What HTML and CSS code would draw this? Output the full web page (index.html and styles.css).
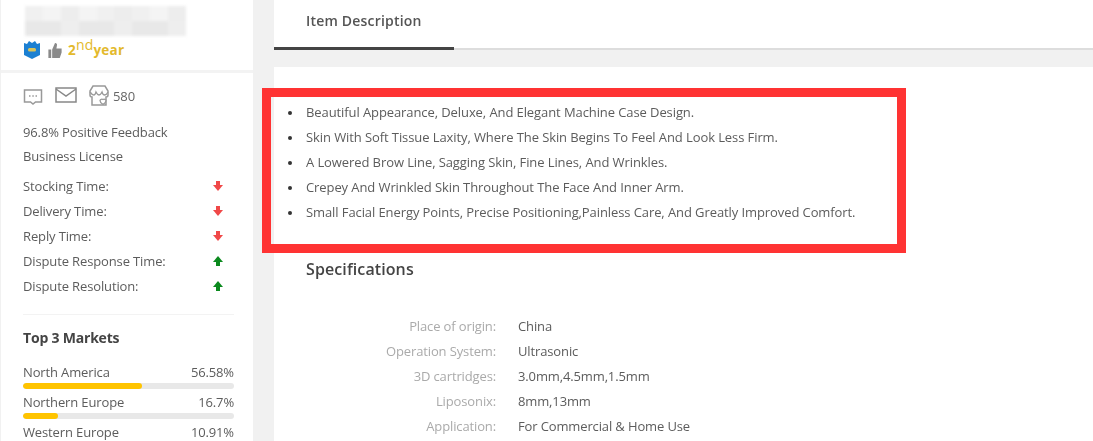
FILE: index.html
```html
<!DOCTYPE html>
<html lang="en">
<head>
<meta charset="utf-8">
<title>Item Description</title>
<link rel="stylesheet" href="styles.css">
</head>
<body>
<div class="page">
  <aside class="side">
    <div class="brand">
      <div class="blurred-name">
        <div class="mosaic-row"><i></i><i></i><i></i><i></i><i></i><i></i><i></i><i></i><i></i></div>
        <div class="mosaic-row"><i></i><i></i><i></i><i></i><i></i><i></i><i></i><i></i><i></i></div>
      </div>
      <div class="badges">
        <svg class="badge-shield" viewBox="0 0 18 20"><path d="M1 3l3 1 2-3 3 2 3-2 2 3 3-1v12l-8 4-8-4z" fill="#1c80d2"/><rect x="5" y="8" width="8" height="3.5" rx="1.5" fill="#d8c45c"/></svg>
        <svg class="badge-thumb" viewBox="0 0 16 18"><path d="M1 8h3v9H1zM5 8l3-7c2 0 2.500 1.500 2 3l-.5 3H15v4l-2 6H5z" fill="#8a8a8a"/></svg>
        <span class="year">2<sup>nd</sup>year</span>
      </div>
    </div>
    <div class="stats">
      <div class="contact">
        <svg class="ico-chat" viewBox="0 0 20 18"><path d="M1.500 2h17v12h-6l-2.500 2-2.500-2h-6z" fill="none" stroke="#999" stroke-width="1.500"/><path d="M6 8h1.500M9.300 8h1.500M12.500 8H14" stroke="#999" stroke-width="1.500"/></svg>
        <svg class="ico-mail" viewBox="0 0 22 16"><path d="M1 1h20v14H1z" fill="none" stroke="#888" stroke-width="1.500"/><path d="M1 2l10 7 10-7" fill="none" stroke="#888" stroke-width="1.500"/></svg>
        <svg class="ico-store" viewBox="0 0 20 22"><path d="M4 1h12l3 5v4a2 2 0 0 1-2 2v8H3v-8a2 2 0 0 1-2-2V6z" fill="none" stroke="#999" stroke-width="1.500"/><path d="M1 7c3 4 5 4 6 0 2 4 4 4 6 0 1 4 4 4 6 0" fill="none" stroke="#999" stroke-width="1.300"/><path d="M11 15.500a2 2 0 0 1 3-1 2 2 0 0 1 3 1c0 2-3 4-3 4s-3-2-3-4z" fill="#fff" stroke="#999" stroke-width="1.300"/></svg>
        <span class="count">580</span>
      </div>
      <p class="line">96.8% Positive Feedback</p>
      <p class="line">Business License</p>
      <ul class="times">
        <li><span>Stocking Time:</span><b class="arrow down"></b></li>
        <li><span>Delivery Time:</span><b class="arrow down"></b></li>
        <li><span>Reply Time:</span><b class="arrow down"></b></li>
        <li><span>Dispute Response Time:</span><b class="arrow up"></b></li>
        <li><span>Dispute Resolution:</span><b class="arrow up"></b></li>
      </ul>
      <h3 class="markets-title">Top 3 Markets</h3>
      <div class="market"><div class="market-row"><span>North America</span><span>56.58%</span></div><div class="bar"><div class="fill" style="width:56.58%"></div></div></div>
      <div class="market"><div class="market-row"><span>Northern Europe</span><span>16.7%</span></div><div class="bar"><div class="fill" style="width:16.7%"></div></div></div>
      <div class="market"><div class="market-row"><span>Western Europe</span><span>10.91%</span></div><div class="bar"><div class="fill" style="width:10.91%"></div></div></div>
    </div>
  </aside>
  <main class="main">
    <div class="tabs"><div class="tab">Item Description</div></div>
    <div class="content">
      <ul class="features">
        <li>Beautiful Appearance, Deluxe, And Elegant Machine Case Design.</li>
        <li>Skin With Soft Tissue Laxity, Where The Skin Begins To Feel And Look Less Firm.</li>
        <li>A Lowered Brow Line, Sagging Skin, Fine Lines, And Wrinkles.</li>
        <li>Crepey And Wrinkled Skin Throughout The Face And Inner Arm.</li>
        <li>Small Facial Energy Points, Precise Positioning,Painless Care, And Greatly Improved Comfort.</li>
      </ul>
      <h2 class="spec-title">Specifications</h2>
      <dl class="specs">
        <dt>Place of origin:</dt><dd>China</dd>
        <dt>Operation System:</dt><dd>Ultrasonic</dd>
        <dt>3D cartridges:</dt><dd>3.0mm,4.5mm,1.5mm</dd>
        <dt>Liposonix:</dt><dd>8mm,13mm</dd>
        <dt>Application:</dt><dd>For Commercial &amp; Home Use</dd>
      </dl>
    </div>
  </main>
</div>
<div class="highlight"></div>
</body>
</html>
```
FILE: styles.css
```css
* { box-sizing: border-box; }
html, body { margin: 0; height: 441px; overflow: hidden; background: #f1f1f1; }
body { font-family: "Open Sans", sans-serif; font-size: 13px; color: #5c5c5c; letter-spacing: -0.09px; position: relative; }
.page { display: flex; gap: 21px; height: 441px; padding-left: 1px; filter: blur(0.5px); }
.side { width: 252px; flex: none; background: #fff; }
.brand { height: 70px; padding: 6px 0 0 24px; }
.blurred-name { width: 161px; height: 29px; margin-bottom: 3px; filter: blur(1.5px); }
.mosaic-row { display: flex; height: 15px; }
.mosaic-row i { flex: 1; background: #f0f0f0; }
.mosaic-row i:nth-child(2n) { background: #f4f4f4; }
.mosaic-row i:nth-child(3n) { background: #ededed; }
.mosaic-row + .mosaic-row i { background: #e8e8e8; }
.mosaic-row + .mosaic-row i:nth-child(3n) { background: #eeeeee; }
.badges { display: flex; align-items: center; gap: 7px; height: 24px; margin-left: -2px; }
.badge-shield { width: 18px; height: 20px; }
.badge-thumb { width: 16px; height: 17px; margin-left: -1px; }
.year { font-weight: 700; font-size: 13.500px; color: #e3b92c; letter-spacing: 0.2px; margin-left: -2px; }
.year sup { font-size: 14px; font-weight: 400; line-height: 0; vertical-align: 5px; }
.stats { border-top: 3px solid #f3f3f3; padding: 13px 19px 0 22px; }
.contact { display: flex; align-items: center; height: 20px; }
.ico-chat { width: 20px; height: 18px; margin-top: 2px; }
.ico-mail { width: 22px; height: 16px; margin-left: 12px; margin-top: -2px; }
.ico-store { width: 20px; height: 22px; margin-left: 12px; }
.count { margin-left: 4px; color: #666; }
.line { margin: 0; height: 24px; line-height: 24px; letter-spacing: -0.13px; }
.contact + .line { margin-top: 14px; }
.times { list-style: none; margin: 5px 0 0; padding: 0; letter-spacing: -0.13px; }
.times li { display: flex; justify-content: space-between; align-items: center; height: 25px; padding-right: 11px; }
.arrow { position: relative; display: block; width: 10px; height: 10px; }
.arrow::before { content: ""; position: absolute; left: 3px; width: 4px; height: 5px; }
.arrow::after { content: ""; position: absolute; left: 0; border-left: 5px solid transparent; border-right: 5px solid transparent; }
.arrow.down::before { top: 0; background: #f04848; }
.arrow.down::after { top: 4px; border-top: 6px solid #f04848; }
.arrow.up::before { bottom: 0; background: #0b8a1e; }
.arrow.up::after { bottom: 4px; border-bottom: 6px solid #0b8a1e; }
.markets-title { margin: 16px 0 0; padding-top: 13px; border-top: 1px solid #f3f3f3; font-size: 14px; line-height: 20px; font-weight: 700; color: #444; letter-spacing: -0.2px; }
.market { margin-top: 15px; letter-spacing: -0.13px; }
.market + .market { margin-top: 4px; }
.market-row { display: flex; justify-content: space-between; height: 18px; line-height: 18px; }
.bar { height: 6px; margin-top: 2px; border-radius: 3px; background: #e8e8e8; overflow: hidden; }
.fill { height: 100%; border-radius: 3px; background: #ffc400; }
.main { flex: 1; min-width: 0; }
.tabs { height: 50px; background: #fff; border-bottom: 2px solid #ddd; }
.tab { width: 180px; height: 50px; padding: 11px 0 0 32px; border-bottom: 3px solid #444; font-size: 14px; line-height: 20px; font-weight: 600; color: #555; letter-spacing: 0.2px; }
.content { margin-top: 17px; height: 374px; background: #fff; padding-top: 33px; }
.features { margin: 0; padding: 0 0 0 32px; list-style: none; }
.features li { position: relative; height: 25px; line-height: 25px; }
.features li::before { content: ""; position: absolute; left: -18px; top: 11px; width: 4px; height: 4px; border-radius: 50%; background: #333; }
.spec-title { margin: 33px 0 0 32px; font-size: 16px; line-height: 22px; font-weight: 600; color: #444; letter-spacing: 0.1px; }
.specs { display: grid; grid-template-columns: 222px 1fr; column-gap: 22px; margin: 34px 0 0; grid-auto-rows: 25px; line-height: 25px; letter-spacing: -0.13px; }
.specs dt { text-align: right; color: #aaa; }
.specs dd { margin: 0; }
.highlight { position: absolute; left: 262px; top: 88px; width: 644px; height: 165px; border: 9px solid #ff3333; }
```
